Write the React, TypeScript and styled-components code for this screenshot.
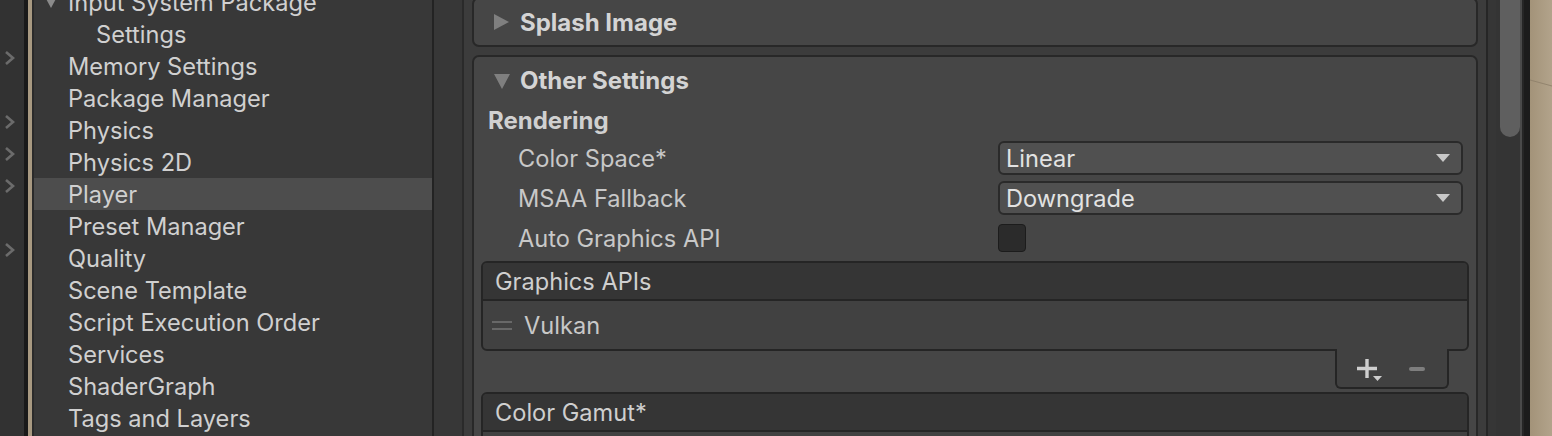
import React from 'react'
import styled, { createGlobalStyle } from 'styled-components'

const GlobalStyle = createGlobalStyle`
  html, body {
    margin: 0;
    padding: 0;
    background: #383838;
  }
  body {
    font-family: Inter, "Noto Sans", sans-serif;
    color: #d0d0d0;
  }
  * { box-sizing: border-box; }
`

const Frame = styled.div`
  display: flex;
  width: 1552px;
  height: 436px;
  overflow: hidden;
`

const Dock = styled.div`
  width: 24px;
  flex: none;
  background: #323232;
  padding-top: 10px;
`

const DockSlot = styled.div`
  height: 32px;
  display: flex;
  align-items: center;
  padding-left: 4px;
`

const LeftEdge = styled.div`
  flex: none;
  width: 10px;
  background: #a89981;
  border-left: 4px solid #191919;
  border-right: 2px solid #2a2a2a;
`

const Sidebar = styled.div`
  flex: none;
  width: 398px;
  background: #383838;
  overflow: hidden;
`

const SideList = styled.div`
  margin-top: -14px;
`

const SideRow = styled.div<{ $selected?: boolean; $indent?: number }>`
  height: 32px;
  display: flex;
  align-items: center;
  position: relative;
  padding-left: ${({ $indent }) => $indent ?? 34}px;
  background: ${({ $selected }) => ($selected ? '#4d4d4d' : 'transparent')};
  font-size: 23.6px;
  color: #d0d0d0;
  white-space: nowrap;
`

const SideCaret = styled.span`
  position: absolute;
  left: 10px;
  top: 9px;
  width: 0;
  height: 0;
  border-left: 7px solid transparent;
  border-right: 7px solid transparent;
  border-top: 13px solid #8a8a8a;
`

const Splitter = styled.div`
  flex: none;
  width: 2px;
  background: #232323;
`

const Gutter = styled.div`
  flex: none;
  width: 28px;
  background: #373737;
  border-right: 2px solid #2a2a2a;
  box-sizing: content-box;
`

const Inspector = styled.div`
  flex: none;
  width: 1006px;
  background: #3c3c3c;
  padding: 0 8px;
  border-right: 2px solid #262626;
  box-sizing: content-box;
  overflow: hidden;
`

const Box = styled.div<{ $top?: number }>`
  margin-top: ${({ $top }) => $top ?? 0}px;
  border: 2px solid #282828;
  border-radius: 7px;
  background: #464646;
`

const FoldHeader = styled.div`
  height: 46px;
  display: flex;
  align-items: center;
  padding-left: 20px;
  gap: 10px;
  font-size: 24px;
  font-weight: 700;
  color: #d4d4d4;
`

const Caret = styled.span<{ $open?: boolean }>`
  width: 0;
  height: 0;
  ${({ $open }) =>
    $open
      ? `border-left: 8px solid transparent;
         border-right: 8px solid transparent;
         border-top: 15px solid #7f7f7f;
         margin-top: 2px;`
      : `border-top: 8px solid transparent;
         border-bottom: 8px solid transparent;
         border-left: 15px solid #7f7f7f;
         margin-right: 1px;`}
`

const SectionTitle = styled.div`
  height: 35px;
  display: flex;
  align-items: center;
  padding-left: 14px;
  font-size: 24px;
  font-weight: 700;
  color: #d0d0d0;
`

const FieldRow = styled.div`
  height: 40px;
  display: grid;
  grid-template-columns: 480px 1fr;
  align-items: center;
  padding: 0 13px 0 44px;
`

const Label = styled.div`
  font-size: 23.6px;
  color: #c8c8c8;
`

const Dropdown = styled.div`
  height: 34px;
  display: flex;
  align-items: center;
  justify-content: space-between;
  padding: 0 11px 0 6px;
  background: #505050;
  border: 2px solid #2a2a2a;
  border-radius: 6px;
  font-size: 23.6px;
  color: #e2e2e2;
`

const DropArrow = styled.span`
  width: 0;
  height: 0;
  border-left: 7px solid transparent;
  border-right: 7px solid transparent;
  border-top: 8px solid #c8c8c8;
`

const Checkbox = styled.div`
  width: 28px;
  height: 28px;
  background: #2b2b2b;
  border: 1px solid #1c1c1c;
  border-radius: 4px;
`

const ReorderList = styled.div<{ $top?: number }>`
  margin: ${({ $top }) => $top ?? 0}px 7px 0 7px;
  display: flex;
  flex-direction: column;
`

const ListFrame = styled.div`
  border: 2px solid #252525;
  border-radius: 6px;
  overflow: hidden;
  background: #414141;
`

const ListHeader = styled.div`
  height: 36px;
  display: flex;
  align-items: center;
  padding-left: 12px;
  background: #353535;
  border-bottom: 2px solid #252525;
  box-sizing: content-box;
  font-size: 23.6px;
  color: #cfcfcf;
`

const ListItem = styled.div`
  height: 48px;
  display: flex;
  align-items: center;
  gap: 12px;
  padding-left: 9px;
  font-size: 23.6px;
  color: #c8c8c8;
`

const Handle = styled.span`
  width: 20px;
  height: 9px;
  border-top: 2px solid #686868;
  border-bottom: 2px solid #686868;
`

const ListFooter = styled.div`
  align-self: flex-end;
  margin: -2px 20px 0 0;
  width: 114px;
  height: 40px;
  display: flex;
  align-items: center;
  gap: 24px;
  padding: 2px 0 0 20px;
  background: #414141;
  border: 2px solid #252525;
  border-top: none;
  border-radius: 0 0 6px 6px;
  position: relative;
  z-index: 1;
`

const Scrollbar = styled.div`
  flex: none;
  width: 34px;
  background: #363636;
  padding-left: 8px;
  border-right: 2px solid #4a4a4a;
`

const Track = styled.div`
  height: 100%;
  background: #343434;
  padding-left: 4px;
`

const Thumb = styled.div`
  height: 137px;
  background: #5f5f5f;
  border-radius: 0 0 11px 11px;
`

const RightEdge = styled.div`
  flex: none;
  width: 8px;
  background: #1c1c1c;
  border-left: 2px solid #262626;
`

const Desktop = styled.div`
  flex: 1;
  background: linear-gradient(90deg, #a39379 0%, #b2a38b 100%);
  position: relative;
`

const Chevron = () => (
  <svg width="12" height="16" viewBox="0 0 12 16">
    <path d="M2 2 L9 8 L2 14" fill="none" stroke="#6b6b6b" strokeWidth="2.6" />
  </svg>
)

const PlusIcon = () => (
  <svg width="28" height="26" viewBox="0 0 28 26">
    <path d="M10 3 V22 M0 12.5 H20" stroke="#cfcfcf" strokeWidth="3.4" />
    <path d="M16 20 H25 L20.5 25 Z" fill="#cfcfcf" />
  </svg>
)

const MinusIcon = () => (
  <svg width="18" height="6" viewBox="0 0 18 6">
    <rect x="0" y="1" width="16" height="4" rx="2" fill="#7e7e7e" />
  </svg>
)

const sideItems = [
  { label: 'Input System Package', caret: true },
  { label: 'Settings', indent: 62 },
  { label: 'Memory Settings' },
  { label: 'Package Manager' },
  { label: 'Physics' },
  { label: 'Physics 2D' },
  { label: 'Player', selected: true },
  { label: 'Preset Manager' },
  { label: 'Quality' },
  { label: 'Scene Template' },
  { label: 'Script Execution Order' },
  { label: 'Services' },
  { label: 'ShaderGraph' },
  { label: 'Tags and Layers' },
]

const dockChevrons = [false, true, false, true, true, true, false, true, false, false, false, false, false, false]

export default function App() {
  return (
    <>
      <GlobalStyle />
      <Frame>
        <Dock>
          {dockChevrons.map((on, i) => (
            <DockSlot key={i}>{on && <Chevron />}</DockSlot>
          ))}
        </Dock>
        <LeftEdge />
        <Sidebar>
          <SideList>
            {sideItems.map((it) => (
              <SideRow key={it.label} $selected={it.selected} $indent={it.indent}>
                {it.caret && <SideCaret />}
                {it.label}
              </SideRow>
            ))}
          </SideList>
        </Sidebar>
        <Splitter />
        <Gutter />
        <Inspector>
          <Box $top={-3}>
            <FoldHeader>
              <Caret />
              Splash Image
            </FoldHeader>
          </Box>
          <Box $top={8}>
            <FoldHeader>
              <Caret $open />
              Other Settings
            </FoldHeader>
            <SectionTitle>Rendering</SectionTitle>
            <FieldRow>
              <Label>Color Space*</Label>
              <Dropdown>
                Linear
                <DropArrow />
              </Dropdown>
            </FieldRow>
            <FieldRow>
              <Label>MSAA Fallback</Label>
              <Dropdown>
                Downgrade
                <DropArrow />
              </Dropdown>
            </FieldRow>
            <FieldRow>
              <Label>Auto Graphics API</Label>
              <Checkbox />
            </FieldRow>
            <ReorderList $top={3}>
              <ListFrame>
                <ListHeader>Graphics APIs</ListHeader>
                <ListItem>
                  <Handle />
                  Vulkan
                </ListItem>
              </ListFrame>
              <ListFooter>
                <PlusIcon />
                <MinusIcon />
              </ListFooter>
            </ReorderList>
            <ReorderList $top={3}>
              <ListFrame>
                <ListHeader>Color Gamut*</ListHeader>
                <ListItem />
              </ListFrame>
            </ReorderList>
          </Box>
        </Inspector>
        <Scrollbar>
          <Track>
            <Thumb />
          </Track>
        </Scrollbar>
        <RightEdge />
        <Desktop>
          <svg width="22" height="436" viewBox="0 0 22 436" style={{ position: 'absolute', left: 0, top: 0 }}>
            <path d="M0 80 L22 86" stroke="#8c7e68" strokeWidth="0.8" fill="none" />
          </svg>
        </Desktop>
      </Frame>
    </>
  )
}
